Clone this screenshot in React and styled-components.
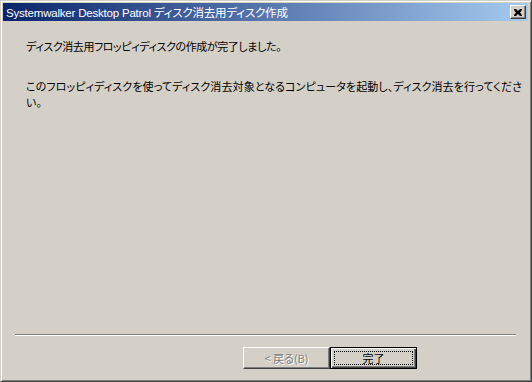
import React from 'react';
import styled, { createGlobalStyle } from 'styled-components';

const GlobalStyle = createGlobalStyle`
  html, body {
    margin: 0;
    padding: 0;
    background: #d4d0c8;
  }
  body {
    font-family: "Liberation Sans", "Noto Sans CJK JP", sans-serif;
  }
`;

const Window = styled.div`
  width: 532px;
  height: 382px;
  box-sizing: border-box;
  background: #d4d0c8;
  border: 1px solid;
  border-color: #d4d0c8 #404040 #404040 #d4d0c8;
  box-shadow: inset 1px 1px 0 #ffffff, inset -1px -1px 0 #808080;
  padding: 2px 3px 2px 2px;
  display: flex;
  flex-direction: column;
`;

const TitleBar = styled.div`
  height: 18px;
  display: flex;
  align-items: center;
  justify-content: space-between;
  padding: 0 2px 0 3px;
  background: linear-gradient(to right, #0a246a, #a6caf0);
  color: #ffffff;
  font-size: 11.5px;
  font-family: "Liberation Sans", "Noto Sans CJK JP", sans-serif;
  font-feature-settings: "palt";
  letter-spacing: -0.2px;
  white-space: nowrap;
`;

const CloseButton = styled.div`
  width: 16px;
  height: 14px;
  box-sizing: border-box;
  background: #d4d0c8;
  border: 1px solid;
  border-color: #ffffff #404040 #404040 #ffffff;
  box-shadow: inset -1px -1px 0 #808080;
  display: flex;
  align-items: center;
  justify-content: center;
`;

const Content = styled.div`
  flex: 1;
  padding: 17px 0 0 23px;
  font-family: "Noto Sans CJK JP", sans-serif;
  font-size: 11px;
  font-feature-settings: "palt";
  line-height: 16px;
  color: #000000;
`;

const Para = styled.p`
  margin: 0 0 ${(p) => p.$gap || 0}px;
  white-space: nowrap;
  letter-spacing: ${(p) => p.$spacing || 0}px;
`;

const Separator = styled.div`
  margin: 0 12px 0 12px;
  height: 0;
  border-top: 1px solid #808080;
  border-bottom: 1px solid #ffffff;
`;

const ButtonRow = styled.div`
  display: flex;
  justify-content: flex-end;
  padding: 11px 111px 10px 0;
`;

const Button = styled.button`
  width: 87px;
  height: 22px;
  box-sizing: border-box;
  margin: 0;
  padding: 0;
  background: #d4d0c8;
  font-family: "Noto Sans CJK JP", sans-serif;
  font-size: 11px;
  font-feature-settings: "palt";
  border: 1px solid;
  border-color: #ffffff #404040 #404040 #ffffff;
  box-shadow: inset -1px -1px 0 #808080;
  color: ${(p) => (p.disabled ? '#808080' : '#000000')};
  text-shadow: ${(p) => (p.disabled ? '1px 1px 0 #ffffff' : 'none')};
  display: flex;
  align-items: center;
  justify-content: center;
`;

const DefaultButton = styled(Button)`
  border: 1px solid #000000;
  box-shadow: inset 1px 1px 0 #ffffff, inset -1px -1px 0 #404040, inset -2px -2px 0 #808080;
  padding: 3px;
`;

const FocusRect = styled.span`
  flex: 1;
  align-self: stretch;
  border: 1px dotted #000000;
  display: flex;
  align-items: center;
  justify-content: center;
`;

export default function App() {
  return (
    <>
      <GlobalStyle />
      <Window>
        <TitleBar>
          <span>Systemwalker Desktop Patrol ディスク消去用ディスク作成</span>
          <CloseButton>
            <svg width="8" height="7" viewBox="0 0 8 7">
              <path d="M0 0h2l2 2 2-2h2v1L6 3.5 8 6v1H6L4 5 2 7H0V6l2-2.5L0 1z" fill="#000" />
            </svg>
          </CloseButton>
        </TitleBar>
        <Content>
          <Para $gap={24} $spacing={-0.4}>ディスク消去用フロッピィディスクの作成が完了しました。</Para>
          <Para $spacing={0.1}>
            このフロッピィディスクを使ってディスク消去対象となるコンピュータを起動し、ディスク消去を行ってくださ
            <br />
            い。
          </Para>
        </Content>
        <Separator />
        <ButtonRow>
          <Button disabled>&lt; 戻る(B)</Button>
          <DefaultButton>
            <FocusRect>完了</FocusRect>
          </DefaultButton>
        </ButtonRow>
      </Window>
    </>
  );
}
